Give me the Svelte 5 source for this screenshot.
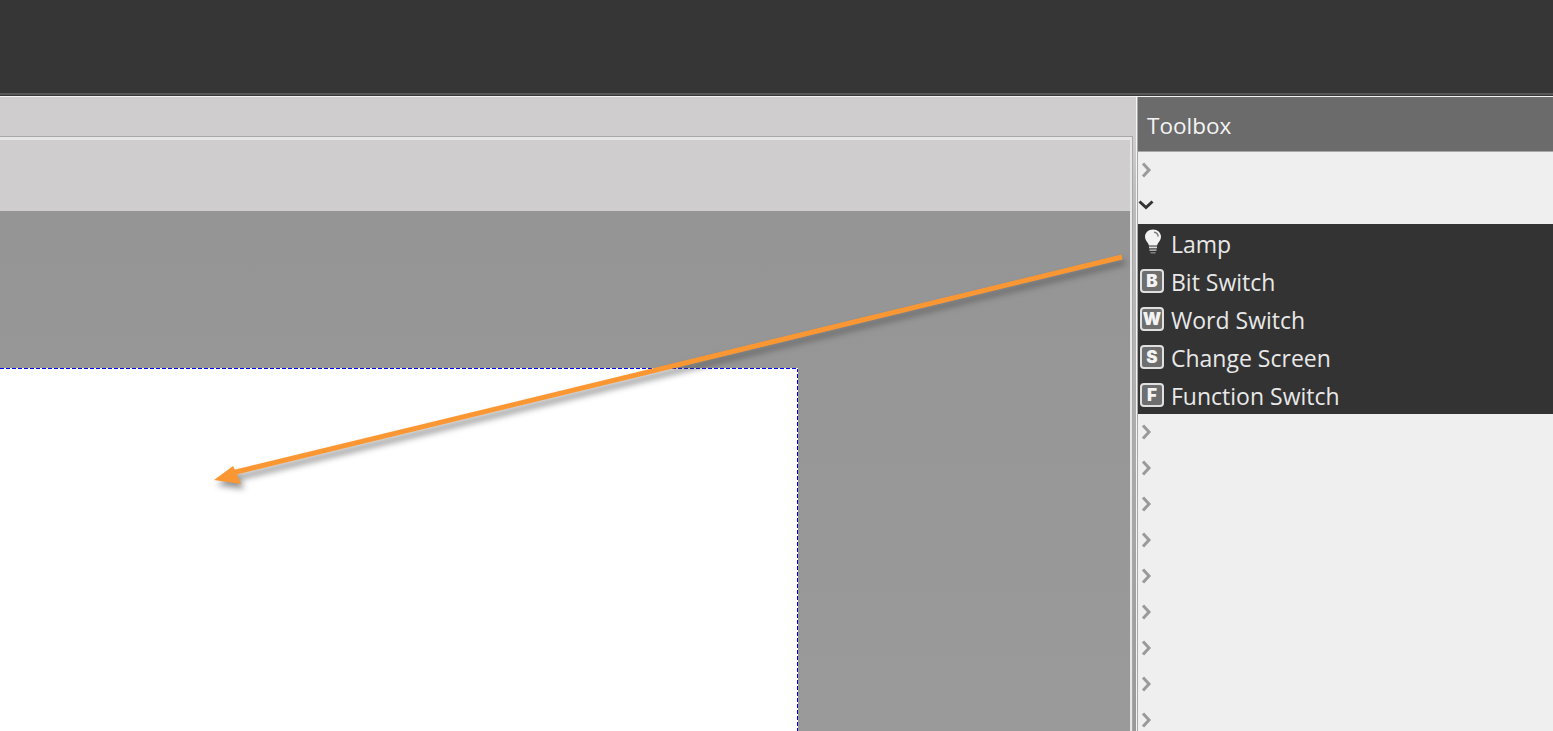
<script>
    const topRows = [{ open: false }, { open: true }];
    const tools = [
        { name: "Lamp", icon: "lamp" },
        { name: "Bit Switch", icon: "B" },
        { name: "Word Switch", icon: "W" },
        { name: "Change Screen", icon: "S" },
        { name: "Function Switch", icon: "F" },
    ];
    const closedRows = Array(9).fill(0);
</script>

<div class="window">
    <div class="titlebar"></div>
    <div class="workspace">
        <div class="editor">
            <div class="tabstrip"></div>
            <div class="frame">
                <div class="ruler"></div>
                <div class="stage">
                    <div class="page"></div>
                </div>
            </div>
        </div>

        <aside class="toolbox">
            <div class="toolbox-head">Toolbox</div>
            <div class="group">
                {#each topRows as row}
                    <div class="group-row">
                        {#if row.open}
                            <svg class="chev open" width="16" height="10" viewBox="0 0 16 10"><path d="M1.500 1.500l6.500 6 6.500-6" /></svg>
                        {:else}
                            <svg class="chev" width="11" height="16" viewBox="0 0 11 16"><path d="M2 1.500l6 6.500-6 6.500" /></svg>
                        {/if}
                    </div>
                {/each}
            </div>
            <ul class="tools">
                {#each tools as tool}
                    <li>
                        {#if tool.icon === "lamp"}
                            <svg class="lamp" width="26" height="28" viewBox="0 0 26 28">
                                <path d="M13 1.500c-4.600 0-8 3.200-8 7.300 0 3 1.900 4.700 3 6.500.6 1 .7 1.700.9 2.200h8.200c.2-.5.300-1.200.9-2.200 1.100-1.800 3-3.500 3-6.500 0-4.100-3.400-7.300-8-7.300z" fill="#f2f2f2" />
                                <path d="M14 4.300c2.300.2 4 2 4.200 4.300" fill="none" stroke="#7a7a7a" stroke-width="1.400" />
                                <rect x="9" y="18.500" width="8" height="1.800" fill="#dcdcdc" />
                                <rect x="9.500" y="21.300" width="7" height="1.700" fill="#a8a8a8" />
                                <rect x="10.500" y="24" width="5" height="1.500" fill="#808080" />
                            </svg>
                        {:else}
                            <span class="badge">{tool.icon}</span>
                        {/if}
                        <span class="tool-name">{tool.name}</span>
                    </li>
                {/each}
            </ul>
            <div class="group">
                {#each closedRows as _}
                    <div class="group-row low">
                        <svg class="chev" width="11" height="16" viewBox="0 0 11 16"><path d="M2 1.500l6 6.500-6 6.500" /></svg>
                    </div>
                {/each}
            </div>
        </aside>
    </div>

    <svg class="arrow" width="1553" height="731" viewBox="0 0 1553 731">
        <defs>
            <filter id="soft" x="-5%" y="-20%" width="110%" height="140%">
                <feGaussianBlur stdDeviation="3" />
            </filter>
        </defs>
        <g fill="#444" stroke="#444" opacity="0.6" filter="url(#soft)" transform="translate(3 5)">
            <line x1="1122" y1="257" x2="232" y2="473" stroke-width="5" />
            <path d="M214 480l19-14 8 18z" stroke="none" />
        </g>
        <line x1="1122" y1="257" x2="232" y2="473" stroke="#fa9733" stroke-width="5" />
        <path d="M214 480l19-14 3 6 5 12z" fill="#fa9733" />
    </svg>
</div>

<style>
    :global(body) {
        margin: 0;
    }

    .window {
        position: relative;
        width: 1553px;
        height: 731px;
        overflow: hidden;
        background: #cfcdcd;
        font-family: "Open Sans", "Noto Sans", sans-serif;
    }

    .titlebar {
        height: 93px;
        background: #363636;
        border-bottom: 2px solid #585858;
        box-shadow: 0 1px 0 #363636;
    }

    .workspace {
        display: flex;
        height: 635px;
        margin-top: 1px;
        border-top: 1px solid #f4f4f4;
    }

    .editor {
        width: 1136px;
        display: flex;
        flex-direction: column;
        /* the gutter right of the frame darkens towards the bottom */
        background: linear-gradient(#cfcdcd 40px, #bbb 115px, #999);
        border-right: 1px solid #f4f4f4;
    }

    .tabstrip {
        height: 39px;
        flex: none;
    }

    .frame {
        flex: 1;
        min-height: 0;
        display: flex;
        flex-direction: column;
        width: 1130px;
        background: #cfcdcd;
        border-top: 1px solid #a8a8a8;
        border-right: 1px solid #a8a8a8;
        box-shadow: inset 0 3px 0 #e6e6e6, inset -2px 0 0 #e6e6e6;
        padding: 3px 2px 0 0;
    }

    .ruler {
        height: 71px;
        flex: none;
    }

    .stage {
        flex: 1;
        min-height: 0;
        background: linear-gradient(#959595, #9a9a9a);
        padding-top: 157px;
    }

    .page {
        width: 798px;
        height: 400px;
        background:
            repeating-linear-gradient(90deg, #0000f0 0 4px, #fff 4px 6px) top / 100% 1px no-repeat,
            repeating-linear-gradient(180deg, #0000f0 0 4px, #fff 4px 6px) right / 1px 100% no-repeat,
            #fff;
    }

    .toolbox {
        flex: 1;
        min-width: 0;
        display: flex;
        flex-direction: column;
        background: #efefef;
        border-left: 1px solid #a8a8a8;
    }

    .toolbox-head {
        height: 55px;
        flex: none;
        box-sizing: border-box;
        display: flex;
        align-items: center;
        padding: 3px 0 0 9px;
        background: #6b6b6b;
        border-bottom: 1px solid #a8a8a8;
        color: #f4f4f4;
        font-size: 22.500px;
    }

    .group-row {
        height: 36px;
        display: flex;
        align-items: center;
        padding-left: 3px;
    }

    .chev {
        flex: none;
    }

    .chev path {
        fill: none;
        stroke: #9a9a9a;
        stroke-width: 3;
    }

    .chev.open path {
        stroke: #333;
    }

    .chev.open {
        margin: -2px 0 0 -3px;
    }

    .tools {
        list-style: none;
        margin: 0;
        padding: 0;
        background: #333;
    }

    .tools li {
        height: 38px;
        display: flex;
        align-items: center;
        gap: 7px;
        padding-left: 2px;
        color: #e8e8e8;
        font-size: 23px;
    }

    .tool-name {
        margin-top: 2px;
    }

    .lamp {
        flex: none;
        margin-right: -2px;
        margin-top: -2px;
    }

    .badge {
        flex: none;
        box-sizing: border-box;
        width: 24px;
        height: 24px;
        display: flex;
        align-items: center;
        justify-content: center;
        background: #6e6e6e;
        border: 2px solid #e0e0e0;
        border-radius: 4px;
        color: #f4f4f4;
        font-family: Inter, "Liberation Sans", sans-serif;
        font-size: 17px;
        font-weight: 900;
    }

    .arrow {
        position: absolute;
        left: 0;
        top: 0;
        pointer-events: none;
    }
</style>
